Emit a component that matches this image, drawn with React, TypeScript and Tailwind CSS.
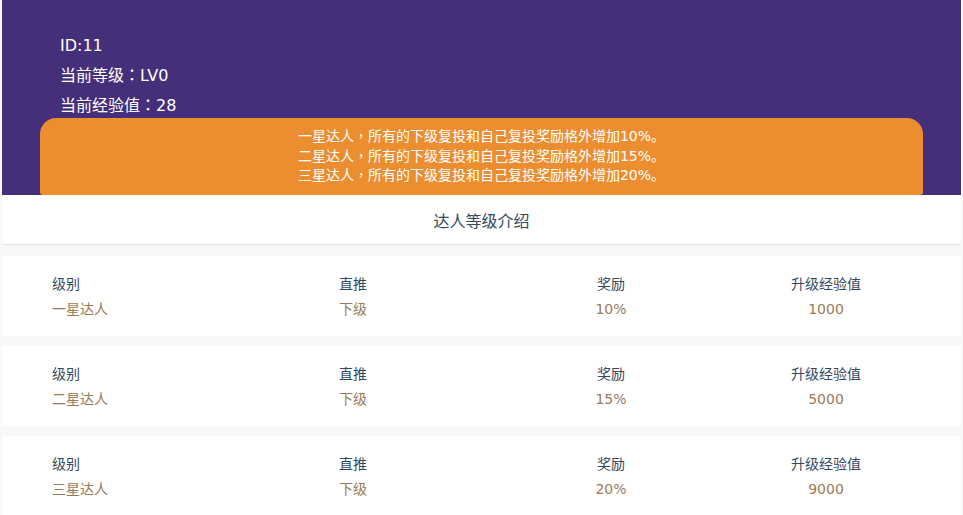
const LEVELS = [
  { name: '一星达人', direct: '下级', reward: '10%', exp: '1000' },
  { name: '二星达人', direct: '下级', reward: '15%', exp: '5000' },
  { name: '三星达人', direct: '下级', reward: '20%', exp: '9000' },
];

const NOTES = [
  { star: '一星达人', rest: '所有的下级复投和自己复投奖励格外增加10%。' },
  { star: '二星达人', rest: '所有的下级复投和自己复投奖励格外增加15%。' },
  { star: '三星达人', rest: '所有的下级复投和自己复投奖励格外增加20%。' },
];

// centered full-width punctuation, as in the original
function Punct({ ch }: { ch: string }) {
  return (
    <span className="leading-[0]" style={{ fontFamily: '"Noto Sans CJK TC", sans-serif' }}>
      {ch}
    </span>
  );
}

function LevelCard({ level }: { level: (typeof LEVELS)[number] }) {
  return (
    <div className="bg-white h-[80px] pt-[16px] pl-[50px] flex text-[14px] leading-[25px]">
      <div className="w-[287px]">
        <div className="text-[#34495e]">级别</div>
        <div className="text-[#9a7b58]">{level.name}</div>
      </div>
      <div className="w-[212px]">
        <div className="text-[#34495e]">直推</div>
        <div className="text-[#9a7b58]">{level.direct}</div>
      </div>
      <div className="w-[120px] text-center">
        <div className="text-[#34495e]">奖励</div>
        <div className="text-[#9a7b58]">{level.reward}</div>
      </div>
      <div className="w-[140px] ml-[85px] text-center">
        <div className="text-[#34495e]">升级经验值</div>
        <div className="text-[#9a7b58]">{level.exp}</div>
      </div>
    </div>
  );
}

export default function App() {
  return (
    <div
      className="min-h-screen bg-[#f8f8f8] px-[2px]"
      style={{ fontFamily: '"DejaVu Sans", "Noto Sans CJK SC", sans-serif' }}
    >
      <div className="bg-[#462f7a] pt-[31px]">
        <div className="pl-[58px] text-white text-[16px] leading-[30px]">
          <div className="h-[30px]">ID:11</div>
          <div className="h-[30px]">
            当前等级<Punct ch="：" />LV0
          </div>
          <div className="h-[30px]">
            当前经验值<Punct ch="：" />28
          </div>
        </div>
        <div className="mx-[38px] -mt-[3px] bg-[#ec8e2f] rounded-t-[16px] rounded-b-[3px] py-[9px] text-center text-white text-[14px] leading-[19.5px]">
          {NOTES.map((n) => (
            <div key={n.star} className="h-[19.5px]">
              {n.star}
              <Punct ch="，" />
              {n.rest}
            </div>
          ))}
        </div>
      </div>

      <div className="bg-white h-[50px] pt-[6px] flex items-center justify-center text-[16px] text-[#34495e] rounded-b-[3px] border-b border-[#e3e3e3]">
        达人等级介绍
      </div>

      <div className="mt-[11px] flex flex-col gap-[10px]">
        {LEVELS.map((l) => (
          <LevelCard key={l.name} level={l} />
        ))}
      </div>
    </div>
  );
}
